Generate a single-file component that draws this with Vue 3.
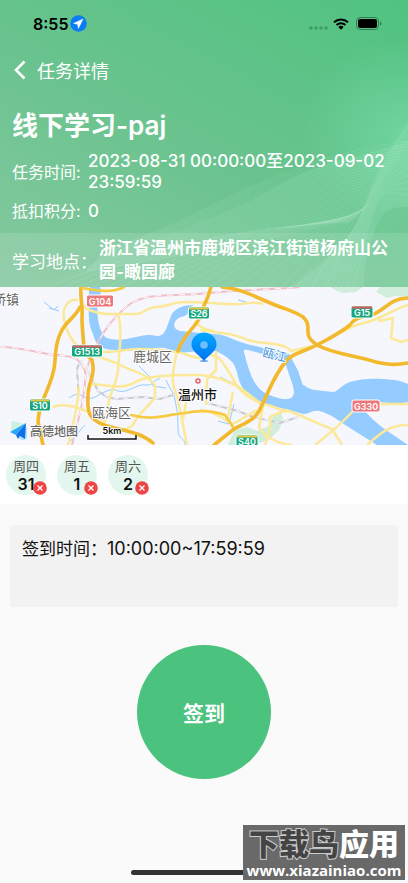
<template>
  <main class="page">
    <header class="hero">
      <svg class="waves" viewBox="0 0 408 287" preserveAspectRatio="xMaxYMax slice" aria-hidden="true">
        <defs>
          <radialGradient id="glow" cx="0.5" cy="0.5" r="0.5">
            <stop offset="0" stop-color="#7be0ae" stop-opacity="0.55" />
            <stop offset="1" stop-color="#7be0ae" stop-opacity="0" />
          </radialGradient>
          <linearGradient id="sheet" x1="0" y1="1" x2="1" y2="0">
            <stop offset="0" stop-color="#b5edcd" stop-opacity="0.02" />
            <stop offset="1" stop-color="#a0ecc6" stop-opacity="0.2" />
          </linearGradient>
        </defs>
        <ellipse cx="400" cy="130" rx="100" ry="90" fill="url(#glow)" />
        <path d="M40 287C150 235 210 225 270 190S360 160 408 140V287Z" fill="url(#sheet)" />
        <path d="M408 207C384 207 382 214 374 232S364 270 364 287H290C330 262 352 236 362 212S388 150 408 122Z" fill="#a5ebc8" opacity="0.2" />
        <path v-for="(d, i) in waveLines" :key="i" :d="d" fill="none" stroke="#c5f4db" stroke-width="0.6" opacity="0.24" />
      </svg>

      <div class="status">
        <span class="time">8:55</span>
        <svg class="locate" width="17" height="17" viewBox="0 0 17 17" aria-hidden="true">
          <circle cx="8.5" cy="8.5" r="8.3" fill="#0a7cf5" />
          <path d="M13 4 3.600 8.400l4 .8.8 4.200Z" fill="#fff" stroke="#fff" stroke-width="0.5" stroke-linejoin="round" />
        </svg>
        <svg class="signal" width="20" height="4" viewBox="0 0 20 4" aria-hidden="true">
          <circle v-for="x in [2, 7, 12, 17]" :key="x" :cx="x" cy="2" r="1.7" fill="#3e9b66" />
        </svg>
        <svg class="wifi" width="16" height="12" viewBox="0 0 16 12" aria-hidden="true">
          <path d="M1 4.3a10.2 10.2 0 0 1 14 0M3.5 7a6.6 6.6 0 0 1 9 0" fill="none" stroke="#000" stroke-width="2" />
          <path d="M8 11.8 5.3 9.1a3.9 3.9 0 0 1 5.4 0Z" fill="#000" />
        </svg>
        <svg class="battery" width="26" height="13" viewBox="0 0 26 13" aria-hidden="true">
          <rect x="0.5" y="0.5" width="22" height="12" rx="3.6" fill="none" stroke="#317e53" />
          <rect x="2" y="2" width="19" height="9" rx="2.2" fill="#000" />
          <path d="M24 4.5c2 .7 2 3.300 0 4Z" fill="#317e53" />
        </svg>
      </div>

      <nav class="nav">
        <button class="back" type="button" aria-label="返回">
          <svg width="12" height="20" viewBox="0 0 12 20" aria-hidden="true">
            <path d="M10.500 1.500 2 10l8.500 8.500" fill="none" stroke="#fff" stroke-width="2.600" />
          </svg>
        </button>
        <span>任务详情</span>
      </nav>

      <h1 class="title">线下学习-paj</h1>

      <dl class="meta">
        <div class="row">
          <dt>任务时间:</dt>
          <dd>2023-08-31 00:00:00至2023-09-02 23:59:59</dd>
        </div>
        <div class="row">
          <dt>抵扣积分:</dt>
          <dd>0</dd>
        </div>
      </dl>

      <div class="place">
        <span class="place-label">学习地点：</span>
        <strong class="place-name">浙江省温州市鹿城区滨江街道杨府山公园-瞰园廊</strong>
      </div>
    </header>

    <svg class="map" viewBox="0 0 408 158" preserveAspectRatio="xMidYMid slice" role="img" aria-label="地图">
      <defs>
        <linearGradient id="pin" x1="0" y1="0" x2="0" y2="1">
          <stop offset="0" stop-color="#00a8ff" />
          <stop offset="1" stop-color="#0074f0" />
        </linearGradient>
      </defs>
      <rect width="408" height="158" fill="#f6f6fd" />

      <!-- parks -->
      <g fill="#d0eedb">
        <path d="M330 0h33l-7 5-13 1-8-3ZM380 0h28v10l-13-1-8 2-11-6Z" />
        <path d="M235 143l12-3 10 4 12-5 4-9 8-6 2 8-4 11-9 9-16 6h-26l4-9Z" />
      </g>

      <!-- river -->
      <path fill="#94ccff" d="M90 0C87 8 92 12 89 22C88 32 90 41 93 47C96 60 104 63 115 63C126 64 137 62 147 63C158 59 169 61 179 66L200 64C211 60 225 67 233 76C239 85 237 97 247 106C257 118 281 120 303 127C310 127 313 121 323 125C336 130 340 135 350 141L377 158H408L383 141C372 132 364 125 360 116C374 112 393 119 408 115V97C397 92 391 93 383 92C373 91 359 92 350 95C341 98 339 104 333 105L315 103C307 102 305 98 303 98C300 91 299 84 296 80L289 67L263 61C250 58 238 55 228 50C218 46 208 47 200 46L181 44C170 42 174 32 181 30C187 29 192 23 193 18C185 18 174 21 171 29C166 41 166 49 157 49C147 47 145 48 136 50C124 53 112 54 105 50C99 43 96 29 98 15C98 9 103 7 100 0Z" />
      <path fill="#f6f6fd" d="M244 65C242 60 254 65 263 67C275 71 285 73 287 81C290 91 294 99 294 106C292 116 279 112 267 107C254 101 249 85 244 65Z" />
      <path fill="none" stroke="#94ccff" stroke-width="1" d="M44 15l10 8 4-4M49 21l10 3M69 111c8-6 12-3 15-1s8 2 13-1 7-4 13-6 7 3 15 1 13-7 21-6 7-6 14-6M166 93c4 10 7 10 9 20s3 14 3 28 7 8 7 17M220 90l20 10M234 117l-5 20-11-3M238 13l8 2M85 138l-18 20M139 79l10 10 4 10 13 2" />

      <!-- railways -->
      <g fill="none">
        <path :d="rail" stroke="#f1bfc9" stroke-width="2" />
        <path :d="rail" stroke="#fff" stroke-width="1" stroke-dasharray="6 6" />
        <path :d="greyRail" stroke="#c8c8d2" stroke-width="2" />
        <path :d="greyRail" stroke="#fff" stroke-width="1" stroke-dasharray="5 5" />
      </g>

      <!-- streets -->
      <g fill="none" stroke="#fce997" stroke-width="2.500" stroke-linejoin="round">
        <path v-for="d in streets" :key="d" :d="d" />
      </g>

      <!-- highways -->
      <g fill="none" stroke-linecap="round" stroke-linejoin="round">
        <path v-for="d in highways" :key="d" :d="d" stroke="#f2b92c" stroke-width="3.600" />
        <path v-for="d in mainRoads" :key="d" :d="d" stroke="#f6ca43" stroke-width="2.600" />
      </g>

      <!-- road shields -->
      <g v-for="s in shields" :key="s.name" :transform="`translate(${s.x} ${s.y})`">
        <rect :x="-s.w / 2" y="-6" :width="s.w" height="12" rx="2" :fill="s.red ? '#ed777b' : '#16a77f'" stroke="#fff" />
        <rect v-if="!s.red" :x="-s.w / 2 + 1" y="-5.500" :width="s.w - 2" height="2" :fill="s.top" />
        <text y="4" class="shield">{{ s.name }}</text>
      </g>

      <g class="label">
        <text x="-7" y="17">桥镇</text>
        <text x="133" y="74">鹿城区</text>
        <text x="92" y="130">瓯海区</text>
      </g>
      <text class="river-name" transform="translate(262 69) rotate(14)">瓯江</text>
      <text class="city" x="178" y="112">温州市</text>
      <circle cx="198" cy="94" r="2" fill="#fff" stroke="#e8605f" stroke-width="1.500" />

      <!-- location pin -->
      <ellipse cx="204" cy="74" rx="4" ry="1" fill="#6eaeea" />
      <path d="M204 74C199 68 191.500 64 191.500 57.500a12.500 12 0 0 1 25 0C216.500 64 209 68 204 74Z" fill="url(#pin)" />
      <circle cx="204" cy="58" r="3.800" fill="#72bdfc" />

      <!-- provider logo and scale -->
      <path d="M11 137q0-3 3-3l7 2 4 1-14 8Z" fill="#cdf2df" />
      <path d="M19 152l3-4 5-8v9q0 4-4 4Z" fill="#a8e8fb" />
      <path d="M26 136 10 145l6 3Z" fill="#28a8fa" />
      <path d="M26 136 16 148l2 4 2-3 5 3Z" fill="#126fe6" />
      <text class="brand" x="30" y="149">高德地图</text>
      <path d="M88 148v4h48v-4" fill="none" stroke="#fff" stroke-width="3" />
      <path d="M88 148v4h48v-4" fill="none" stroke="#111" stroke-width="1.500" />
      <text class="scale" x="112" y="147">5km</text>
    </svg>

    <section class="days">
      <button v-for="d in days" :key="d.date" class="day" type="button">
        <span class="week">{{ d.week }}</span>
        <span class="date">{{ d.date }}</span>
        <svg class="badge" width="14" height="14" viewBox="0 0 14 14" aria-hidden="true">
          <circle cx="7" cy="7" r="6.800" fill="#ee4445" />
          <path d="m4.500 4.500 5 5m0-5-5 5" stroke="#fff" stroke-width="1.300" />
        </svg>
      </button>
    </section>

    <section class="card">签到时间：<span class="hours">10:00:00~17:59:59</span></section>

    <button class="sign" type="button">签到</button>

    <div class="home-bar"></div>
    <div class="watermark">
      <div class="mark-name"><span class="dark">下载鸟</span>应用</div>
      <div class="mark-url">www.xiazainiao.com</div>
    </div>
  </main>
</template>

<script setup>
const days = [
  { week: '周四', date: 31 },
  { week: '周五', date: 1 },
  { week: '周六', date: 2 }
]

// Fans of thin lines in the header background
const waveLines = []
for (let i = 0; i < 26; i++) {
  waveLines.push(
    `M${110 - i} ${247 + i}C${200 + i} ${224 + i} ${270 + i} ${158 + i * 3} ${410 - i * 2} ${141 + i * 3}`
  )
}
for (let i = 0; i < 20; i++) {
  waveLines.push(
    `M${40 + i * 15} 290Q${190 + i * 8} ${228 + i} ${350 + i} ${222 - i}`
  )
}
for (let i = 0; i < 12; i++) {
  waveLines.push(
    `M${285 + i * 6} 290C${330 + i * 3} 258 ${354 + i} 235 ${364 + i} 208S${388 + i} ${142 + i * 5} 410 ${118 + i * 7}`
  )
}

const shields = [
  { name: 'G104', x: 100, y: 14, w: 27, red: true },
  { name: 'S26', x: 199, y: 26, w: 21, top: '#e5c94a' },
  { name: 'G15', x: 362, y: 25, w: 22, top: '#d75c5c' },
  { name: 'G1513', x: 87, y: 64, w: 31, top: '#d75c5c' },
  { name: 'S10', x: 40, y: 118, w: 21, top: '#e5c94a' },
  { name: 'G330', x: 366, y: 119, w: 28, red: true },
  { name: 'S40', x: 247, y: 154, w: 22, top: '#e5c94a' }
]

const rail = 'M0 60C25 60 40 67 56 68S82 70 86 88C84 110 80 130 72 158M86 84C94 58 109 33 130 17C148 5 172 10 208 6S270 3 300 0'
const greyRail = 'M82 74C74 80 78 88 78 95V114M88 84L98 104 107 110 116 112 142 110 160 112 176 107M207 116L238 124 253 130 280 136 298 130'

const streets = [
  'M78 13C68 11 62 21 64 32C66 42 71 57 86 65L116 76C132 85 148 86 155 99V110C149 120 138 126 133 138C123 146 114 144 104 137',
  'M82 18C93 29 114 27 132 27C143 29 146 20 156 20S174 15 184 15S205 15 226 17S247 13 263 17',
  'M118 27C123 45 119 64 118 84C115 103 108 107 108 122L104 137',
  'M95 63C111 68 122 62 138 62S164 63 177 65S195 75 208 68C222 68 223 78 231 88C239 106 249 113 271 119L287 125',
  'M177 64C173 83 170 96 177 108L187 158',
  'M92 97C106 98 124 104 139 93C158 87 185 88 201 88C231 91 247 105 263 119L259 140C264 150 281 158 292 158',
  'M53 120C69 114 90 125 104 134',
  'M79 99C78 119 73 139 68 158',
  'M200 43C219 46 234 46 248 53C264 58 284 55 291 64L317 58C334 51 347 39 364 36C382 32 393 22 408 18',
  'M379 29V34L393 31 391 51 401 55 408 53',
  'M265 158C268 149 271 142 270 130L286 123C299 127 324 140 332 142L342 158',
  'M200 123C213 123 224 133 233 137L257 123M228 131L233 105M206 118L207 92 216 83V64M183 132L186 115',
  'M315 158C332 145 344 134 356 121L380 117H408',
  'M367 158C384 143 391 138 408 138',
  'M194 35C201 40 205 43 214 44'
]

const highways = [
  'M81 0C80 11 83 20 82 31C82 43 84 55 84 65L92 73C96 88 88 96 88 108C87 126 89 132 104 138C121 144 139 144 153 156',
  'M80 20C75 31 65 35 61 45C53 60 57 73 53 86C48 106 39 115 38 135L43 158',
  'M211 0C207 16 202 20 199 32C193 43 183 48 178 64',
  'M222 0C246 2 261 14 286 22C301 28 307 30 308 40C307 51 311 53 317 58C333 67 354 68 376 75C390 78 397 78 408 76',
  'M408 11C391 11 386 22 374 27C364 31 355 29 350 38C339 47 328 52 317 58C303 65 294 66 288 72C274 87 268 107 261 120C256 133 245 136 234 142L214 158'
]

const mainRoads = [
  'M82 1C96 3 111 7 124 0',
  'M131 128C154 134 164 128 185 126C199 123 214 124 225 128L233 140'
]
</script>

<style>
body {
  margin: 0;
  background: #fafafa;
}
</style>

<style scoped>
.page {
  position: relative;
  display: flex;
  flex-direction: column;
  min-height: 100vh;
  color: #111;
  font-family: Inter, "Noto Sans CJK SC", sans-serif;
}

.page button {
  border: 0;
  padding: 0;
  font-family: inherit;
  cursor: pointer;
}

.hero {
  position: relative;
  color: #fff;
  background: linear-gradient(28deg, #86c9a0 0%, #69c38e 50%, #50c380 100%);
}

.hero > * {
  position: relative;
}

.hero > .waves {
  position: absolute;
  top: 0;
  left: 0;
  width: 100%;
  height: 100%;
}

.status {
  display: flex;
  align-items: center;
  height: 47px;
  padding: 0 26px 0 33px;
  color: #000;
}

.time {
  font-size: 16px;
  font-weight: 600;
}

.locate {
  margin-left: 2px;
}

.signal {
  margin: 8px 4px 0 auto;
}

.battery {
  margin-left: 7px;
}

.nav {
  display: flex;
  align-items: center;
  gap: 11px;
  height: 46px;
  padding: 0 14px;
  font-size: 18px;
}

.back {
  display: flex;
  background: none;
}

.title {
  margin: 0;
  padding: 15px 12px 0;
  font-size: 26px;
  font-weight: 600;
  line-height: 36px;
}

.meta {
  margin: 0;
  padding: 7px 12px 11px;
}

.row {
  display: flex;
  align-items: center;
  gap: 6px;
}

.row + .row {
  margin-top: 8px;
}

.row dt {
  flex: none;
  width: 70px;
  font-size: 16px;
  line-height: 21px;
}

.row dd {
  margin: 0;
  font-size: 17px;
  font-weight: 500;
  line-height: 21px;
}

.place {
  display: flex;
  align-items: center;
  padding: 3px 12px;
  background: rgba(255, 255, 255, 0.12);
}

.place-label {
  flex: none;
  width: 87px;
  font-size: 17px;
}

.place-name {
  font-size: 17px;
  font-weight: 600;
  line-height: 24px;
}

.map {
  display: block;
  width: 100%;
  height: 158px;
}

.map text {
  paint-order: stroke;
  stroke-linejoin: round;
}

.shield {
  fill: #fff;
  font-size: 9px;
  font-weight: 600;
  text-anchor: middle;
}

.label {
  fill: #666;
  stroke: #fff;
  stroke-width: 2px;
  font-size: 13px;
}

.river-name {
  fill: #3d8dd6;
  stroke: #fff;
  stroke-width: 2px;
  font-size: 12px;
}

.city {
  fill: #111;
  stroke: #fff;
  stroke-width: 2px;
  font-size: 13px;
  font-weight: 500;
}

.brand {
  fill: #666;
  stroke: #fff;
  stroke-width: 1px;
  font-size: 12px;
  font-weight: 500;
}

.scale {
  fill: #111;
  stroke: #fff;
  stroke-width: 2px;
  font-size: 9px;
  font-weight: 600;
  text-anchor: middle;
}

.days {
  display: flex;
  gap: 11px;
  padding: 10px 6px 9px;
  background: #fff;
}

.day {
  position: relative;
  display: flex;
  flex-direction: column;
  align-items: center;
  justify-content: center;
  width: 40px;
  height: 40px;
  border-radius: 50%;
  background: #e4f7ee;
}

.week {
  color: #555;
  font-size: 13px;
  line-height: 18px;
}

.date {
  color: #111;
  font-size: 16px;
  font-weight: 600;
  line-height: 18px;
}

.badge {
  position: absolute;
  right: -1px;
  bottom: 0;
}

.card {
  min-height: 58px;
  margin: 21px 10px 0;
  padding: 12px;
  border-radius: 4px;
  background: #f2f2f2;
  font-size: 17px;
  line-height: 24px;
}

.hours {
  font-size: 18px;
}

.page .sign {
  align-self: center;
  width: 134px;
  height: 134px;
  margin: 38px 0 100px;
  border-radius: 50%;
  background: #4bc27d;
  color: #fff;
  font-size: 21px;
  font-weight: 600;
}

.home-bar {
  position: absolute;
  bottom: 8px;
  left: 50%;
  width: 146px;
  height: 5px;
  margin-left: -73px;
  border-radius: 3px;
  background: #333;
}

.watermark {
  position: absolute;
  right: 3px;
  bottom: 3px;
  box-sizing: border-box;
  width: 162px;
  height: 55px;
  padding-top: 2px;
  background: #696969;
  color: #fff;
  text-align: center;
  white-space: nowrap;
}

.mark-name {
  font-size: 30px;
  font-weight: 900;
  line-height: 34px;
}

.dark {
  color: #444;
  -webkit-text-stroke: 2px #ccc;
  paint-order: stroke;
}

.mark-url {
  font-family: "Open Sans", sans-serif;
  font-size: 15px;
  font-weight: 700;
  line-height: 18px;
}
</style>
